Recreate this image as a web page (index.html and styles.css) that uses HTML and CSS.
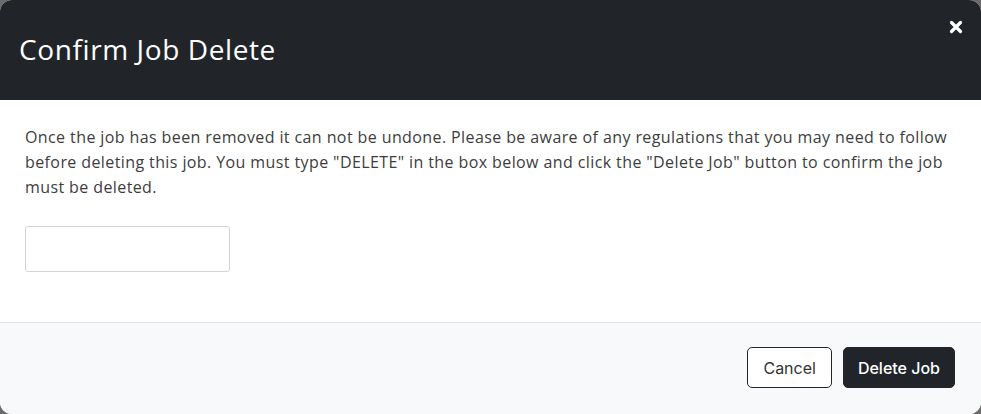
FILE: index.html
```html
<!DOCTYPE html>
<html lang="en">
<head>
    <meta charset="UTF-8">
    <meta name="viewport" content="width=device-width, initial-scale=1.0">
    <title>Confirm Job Delete</title>
    <link rel="stylesheet" href="styles.css">
</head>
<body>
    <div class="modal">
        <div class="modal-header">
            <h1 class="modal-title">Confirm Job Delete</h1>
            <button class="close-btn" aria-label="Close">
                <svg width="14" height="14" viewBox="0 0 14 14">
                    <path d="M2.5 2.5 L11.5 11.5 M11.5 2.5 L2.5 11.5" stroke="#fff" stroke-width="3.2" stroke-linecap="round"/>
                </svg>
            </button>
        </div>
        <div class="modal-body">
            <p>Once the job has been removed it can not be undone. Please be aware of any regulations that you may need to follow before deleting this job. You must type "DELETE" in the box below and click the "Delete Job" button to confirm the job must be deleted.</p>
            <input type="text" class="confirm-input">
        </div>
        <div class="modal-footer">
            <button class="btn btn-outline">Cancel</button>
            <button class="btn btn-dark">Delete Job</button>
        </div>
    </div>
</body>
</html>
```

FILE: styles.css
```css
html, body {
    margin: 0;
    height: 100%;
}
body {
    background: #6b6b6b;
    font-family: "Open Sans", Arial, sans-serif;
}
.modal {
    width: 981px;
    height: 414px;
    border-radius: 12px;
    overflow: hidden;
    display: flex;
    flex-direction: column;
    background: white;
}
.modal-header {
    height: 100px;
    background: #212529;
    display: flex;
    justify-content: space-between;
    align-items: center;
    padding: 0 19px;
    box-sizing: border-box;
    flex-shrink: 0;
}
.modal-title {
    margin: 0;
    color: white;
    font-size: 28px;
    font-weight: 400;
    letter-spacing: 0.6px;
    padding-bottom: 2px;
}
.close-btn {
    align-self: flex-start;
    margin-top: 20px;
    margin-right: -1px;
    background: none;
    border: none;
    padding: 0;
    cursor: pointer;
    line-height: 0;
}
.modal-body {
    flex: 1;
    padding: 25px;
}
.modal-body p {
    margin: 0 0 26px;
    color: #3d3d3d;
    font-size: 16px;
    letter-spacing: 0.4px;
    line-height: 25px;
}
.confirm-input {
    width: 205px;
    height: 46px;
    border: 1px solid #ced4da;
    border-radius: 3px;
    box-sizing: border-box;
    padding: 6px 12px;
    font-size: 16px;
}
.modal-footer {
    height: 92px;
    box-sizing: border-box;
    background: #f8f9fa;
    border-top: 1px solid #dee2e6;
    display: flex;
    justify-content: flex-end;
    align-items: center;
    gap: 11px;
    padding: 0 26px 2px;
}
.btn {
    height: 41px;
    padding: 0 15px;
    border-radius: 5px;
    font-family: Inter, "Liberation Sans", sans-serif;
    font-size: 16px;
    cursor: pointer;
}
.btn-outline {
    background: white;
    color: #333;
    border: 1px solid #212529;
}
.btn-dark {
    background: #212529;
    color: white;
    border: 1px solid #212529;
    font-weight: 500;
    padding: 0 14px;
}
```
